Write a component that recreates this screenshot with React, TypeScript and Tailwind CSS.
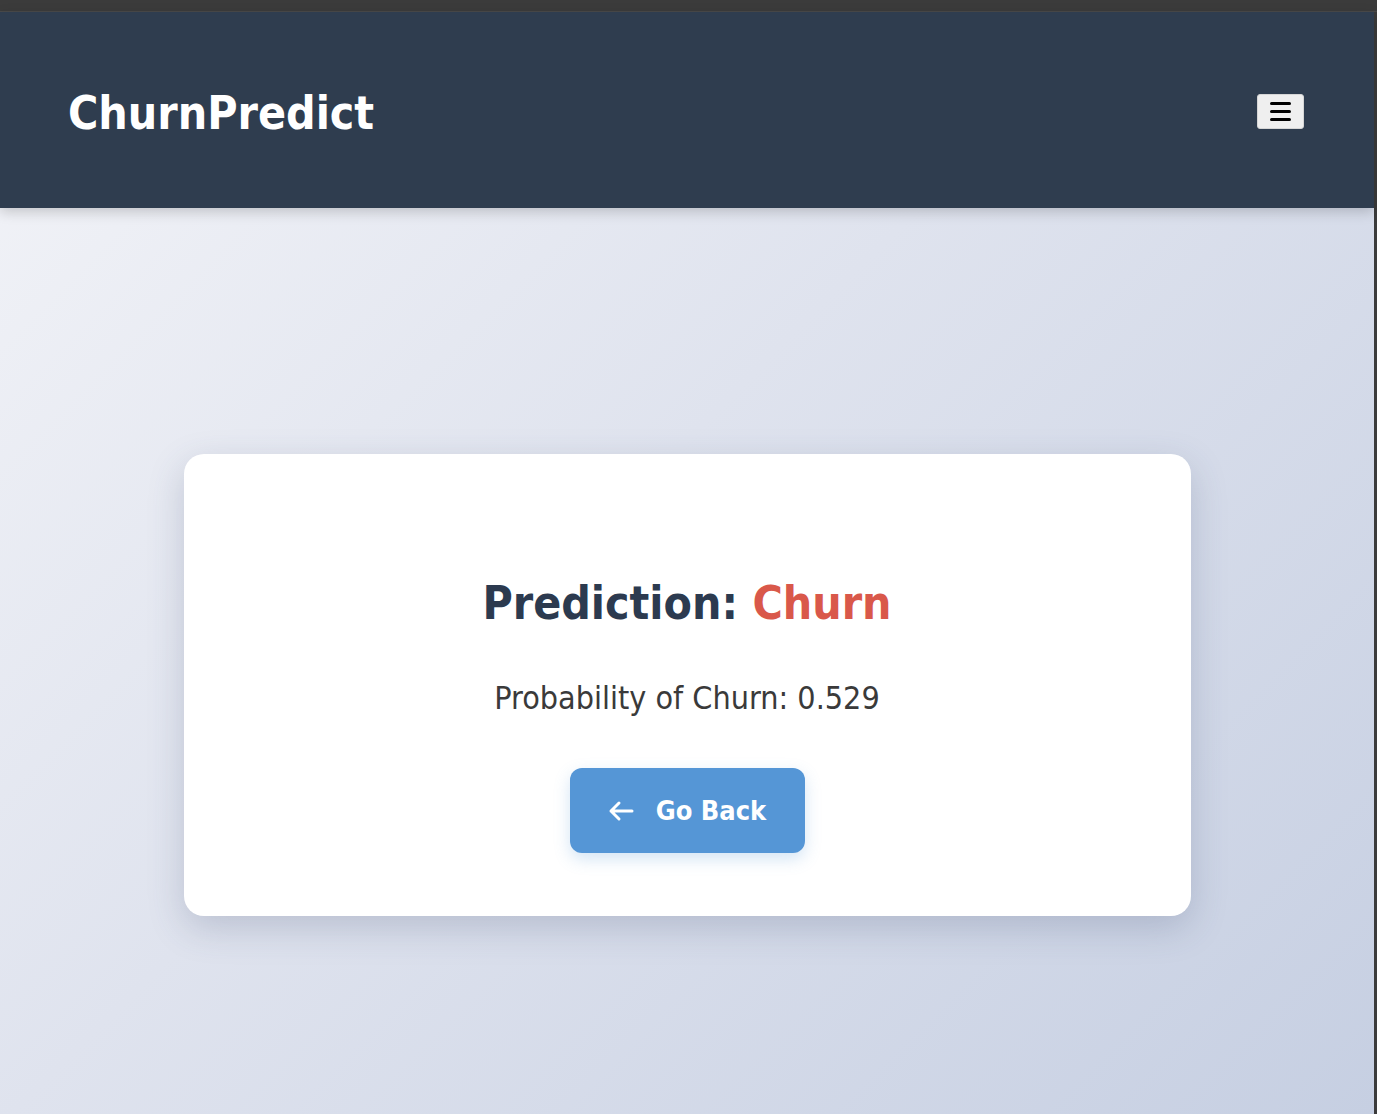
import React from "react";

export default function App() {
  const font = { fontFamily: "'DejaVu Sans Condensed', 'DejaVu Sans', sans-serif" };
  return (
    <div className="relative w-[1377px] h-[1114px] overflow-hidden flex flex-col" style={font}>
      <div className="h-[12px] bg-[#3b3b3b] border-b border-[#4a4a4a]" />
      <div className="flex flex-1 min-h-0">
        <div className="flex-1 flex flex-col bg-[linear-gradient(135deg,#f3f4f8_0%,#dfe3ee_45%,#c6cfe2_100%)]">
          <header className="relative z-10 h-[196px] bg-[#2f3d4f] flex items-center justify-between pl-[68px] pr-[70px] shadow-[0_4px_12px_rgba(0,0,0,0.18)]">
            <h1 className="text-white font-bold text-[46px] leading-none mt-[5px]">ChurnPredict</h1>
            <button className="w-[47px] h-[35px] mt-[2px] bg-[#efefef] rounded-[3px] border border-[#d6d6d6] flex flex-col items-center justify-center gap-[5px]">
              <span className="block w-[21px] h-[3px] bg-black rounded-full" />
              <span className="block w-[21px] h-[3px] bg-black rounded-full" />
              <span className="block w-[21px] h-[3px] bg-black rounded-full" />
            </button>
          </header>
          <main className="flex-1 flex items-start justify-center pt-[246px]">
            <div className="w-[1007px] h-[462px] bg-white rounded-[20px] shadow-[0_12px_36px_rgba(60,75,110,0.22)] flex flex-col items-center pt-[126px]">
              <h2 className="text-[46px] font-bold leading-none text-[#2c3a4f]">
                Prediction: <span className="text-[#d9584a]">Churn</span>
              </h2>
              <p className="mt-[56px] text-[32px] leading-none text-[#3a3a3a]">Probability of Churn: 0.529</p>
              <button className="mt-[54px] w-[235px] h-[85px] rounded-[12px] bg-[#5596d6] text-white flex items-center justify-center gap-[22px] shadow-[0_6px_16px_rgba(85,150,214,0.25)]">
                <svg width="26" height="22" viewBox="0 0 26 22" fill="none" stroke="white" strokeWidth="3" strokeLinecap="round" strokeLinejoin="round">
                  <path d="M24 11H3M11 3L3 11L11 19" />
                </svg>
                <span className="font-bold text-[27px] leading-none">Go Back</span>
              </button>
            </div>
          </main>
        </div>
        <div className="w-[3px] bg-[#3b3b3b]" />
      </div>
    </div>
  );
}
